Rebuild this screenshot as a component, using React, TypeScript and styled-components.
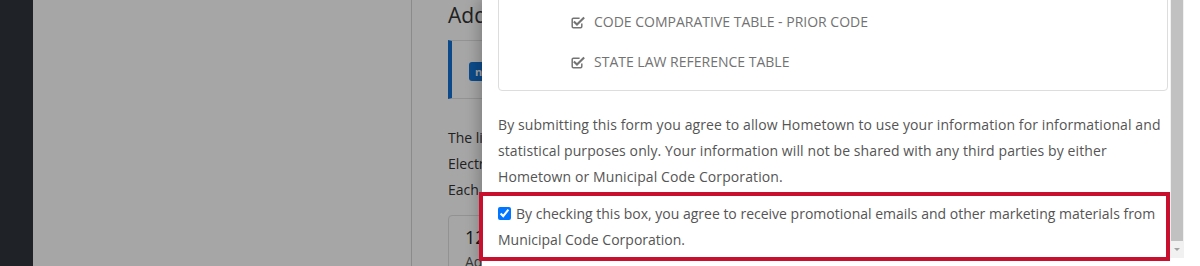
import React from "react";
import styled, { createGlobalStyle } from "styled-components";

const GlobalStyle = createGlobalStyle`
  html, body {
    margin: 0;
    padding: 0;
    background: #ffffff;
  }
  body {
    font-family: "Open Sans", "Liberation Sans", Arial, sans-serif;
    font-size: 14px;
    -webkit-font-smoothing: antialiased;
  }
  * { box-sizing: border-box; }
`;

const Viewport = styled.div`
  position: relative;
  width: 1200px;
  height: 266px;
  overflow: hidden;
  display: flex;
  background: #ffffff;
`;

const Sidebar = styled.aside`
  width: 33px;
  flex: none;
  background: #30363c;
`;

const LeftPanel = styled.section`
  width: 379px;
  flex: none;
  background: #ffffff;
  border-right: 1px solid #d6d6d6;
`;

const Main = styled.main`
  flex: none;
  width: 70px;
  overflow: hidden;
  padding-left: 36px;
  color: #333333;
`;

const MainInner = styled.div`
  width: 720px;
`;

const PageHeading = styled.h4`
  margin: 0 0 10px;
  font-size: 21px;
  line-height: 30px;
  font-weight: 400;
  white-space: nowrap;
`;

const Callout = styled.div`
  border: 1px solid #e2e2e2;
  border-left: 4px solid #1170d4;
  padding: 20px 16px 17px 17px;
  white-space: nowrap;
`;

const Badge = styled.span`
  display: inline-block;
  height: 19px;
  line-height: 19px;
  padding: 0 6px;
  border-radius: 3px;
  background: #1373d6;
  color: #ffffff;
  font-size: 11px;
  font-weight: 700;
`;

const PageText = styled.p`
  margin: 26px 0 12px;
  line-height: 26px;
  white-space: nowrap;
`;

const StatCard = styled.div`
  border: 1px solid #e0e0e0;
  border-radius: 4px;
  padding: 7px 16px 0;
  white-space: nowrap;
`;

const StatNumber = styled.div`
  font-size: 18px;
  line-height: 28px;
  color: #222222;
`;

const StatLabel = styled.div`
  line-height: 22px;
  color: #555555;
`;

const Backdrop = styled.div`
  position: absolute;
  inset: 0;
  background: rgba(0, 0, 0, 0.35);
`;

const Modal = styled.div`
  position: absolute;
  top: 0;
  bottom: 0;
  left: 482px;
  right: 0;
  background: #ffffff;
  box-shadow: -4px 0 12px rgba(0, 0, 0, 0.22);
  display: flex;
  align-items: flex-start;
`;

const ModalBody = styled.div`
  width: 688px;
  flex: none;
  padding: 0 2px 0 16px;
  display: flex;
  flex-direction: column;
  color: #555555;
`;

const DocCard = styled.div`
  margin-top: -12px;
  border: 1px solid #dddddd;
  border-radius: 4px;
  padding: 13px 0 8px 72px;
`;

const DocItem = styled.div`
  height: 40px;
  display: flex;
  align-items: center;
  gap: 9px;
  color: #727272;
  text-transform: uppercase;
  line-height: 20px;
`;

const Notice = styled.p`
  margin: 21px 0 2px;
  line-height: 26px;
  letter-spacing: 0.1px;
`;

const ConsentRow = styled.label`
  display: block;
  margin: 0 -2px 0 -19px;
  border: 4px solid #c8102e;
  padding: 5px 0 4px 15px;
  line-height: 26px;
`;

const ConsentBox = styled.input`
  width: 13px;
  height: 13px;
  margin: 0 5px 0 0;
  vertical-align: -1px;
  accent-color: #0075ff;
`;

const ScrollTrack = styled.div`
  width: 14px;
  height: 258px;
  flex: none;
  background: #f1f1f1;
  display: flex;
  flex-direction: column;
  align-items: center;
`;

const ScrollThumb = styled.div`
  width: 12px;
  height: 241px;
  background: #c1c1c1;
`;

const ScrollArrow = styled.div`
  flex: 1;
  display: flex;
  align-items: center;
  justify-content: center;
  &::after {
    content: "";
    width: 0;
    height: 0;
    border-left: 3px solid transparent;
    border-right: 3px solid transparent;
    border-top: 3px solid #a3a3a3;
  }
`;

const CheckSquareIcon: React.FC = () => (
  <svg width="14" height="13" viewBox="0 0 14 13" aria-hidden="true">
    <path
      d="M10.8 7.4v3.2a1.2 1.2 0 0 1-1.2 1.2H2.4a1.2 1.2 0 0 1-1.2-1.2V3.4a1.2 1.2 0 0 1 1.2-1.2h6.2"
      fill="none"
      stroke="#747474"
      strokeWidth="1.5"
    />
    <path
      d="M3.6 6.2l2.4 2.4 6.4-6.4"
      fill="none"
      stroke="#747474"
      strokeWidth="2.1"
      strokeLinecap="square"
    />
  </svg>
);

const docs = ["Code Comparative Table - Prior Code", "State Law Reference Table"];

export default function App() {
  return (
    <>
      <GlobalStyle />
      <Viewport>
        <Sidebar />
        <LeftPanel />
        <Main>
          <MainInner>
            <PageHeading>Additional Documents</PageHeading>
            <Callout>
              <Badge>new</Badge> Supplement documents are now available.
            </Callout>
            <PageText>
              The list below shows the documents available for this code.
              <br />
              Electronic copies can be downloaded in PDF format.
              <br />
              Each document is updated with every supplement.
            </PageText>
            <StatCard>
              <StatNumber>12</StatNumber>
              <StatLabel>Additional documents</StatLabel>
            </StatCard>
          </MainInner>
        </Main>
        <Backdrop />
        <Modal>
          <ModalBody>
            <DocCard>
              {docs.map((d) => (
                <DocItem key={d}>
                  <CheckSquareIcon />
                  <span>{d}</span>
                </DocItem>
              ))}
            </DocCard>
            <Notice>
              By submitting this form you agree to allow Hometown to use your information for
              informational and statistical purposes only. Your information will not be shared
              with any third parties by either Hometown or Municipal Code Corporation.
            </Notice>
            <ConsentRow>
              <ConsentBox type="checkbox" defaultChecked />
              By checking this box, you agree to receive promotional emails and other marketing
              materials from Municipal Code Corporation.
            </ConsentRow>
          </ModalBody>
          <ScrollTrack>
            <ScrollThumb />
            <ScrollArrow />
          </ScrollTrack>
        </Modal>
      </Viewport>
    </>
  );
}
